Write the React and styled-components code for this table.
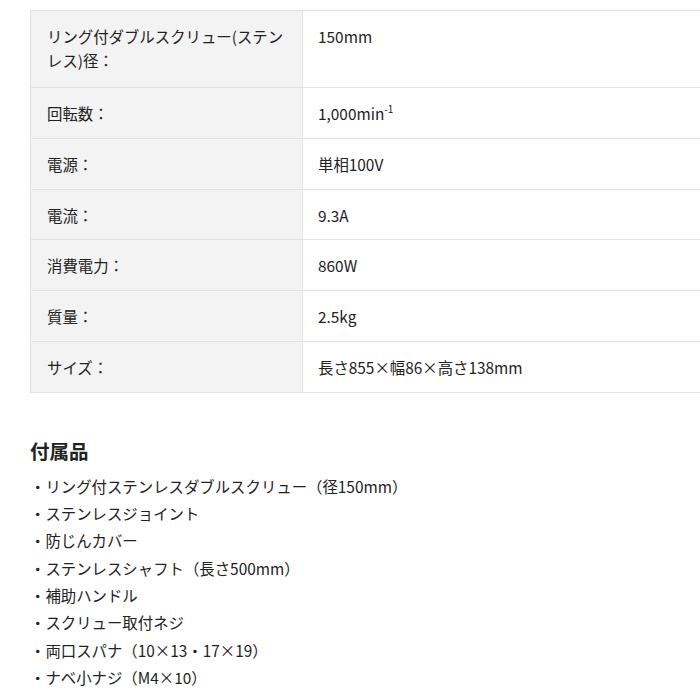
import React from 'react';
import styled, { createGlobalStyle } from 'styled-components';

const GlobalStyle = createGlobalStyle`
  html, body {
    margin: 0;
    padding: 0;
    background: #fff;
    overflow: hidden;
  }
  body {
    font-family: "Noto Sans CJK JP", "Noto Sans", sans-serif;
    color: #222;
  }
`

const Page = styled.div`
  width: 700px;
  height: 700px;
  padding: 10px 0 0 30px;
  box-sizing: border-box;
  overflow: hidden;
`

const SpecTable = styled.table`
  width: 700px;
  border-collapse: collapse;
  font-size: 15.4px;
  line-height: 24px;
`

const Label = styled.th`
  width: 272px;
  box-sizing: border-box;
  background: #f3f3f3;
  border: 1px solid #e2e2e2;
  padding: 13px 16px 12px 16px;
  text-align: left;
  vertical-align: top;
  font-weight: 400;
  height: ${props => props.tall ? '77px' : '50.8px'};
`

const Value = styled.td`
  border: 1px solid #e2e2e2;
  padding: 13px 15px 12px;
  vertical-align: top;
  background: #fff;
`

const Sup = styled.sup`
  font-size: 10px;
  line-height: 0;
  vertical-align: 7px;
`

const Heading = styled.h3`
  margin: 44px 0 8px;
  font-size: 19.5px;
  font-weight: 700;
  line-height: 28px;
`

const List = styled.ul`
  list-style: none;
  margin: 0;
  padding: 0;
  font-size: 15.4px;
  line-height: 27.3px;
`

const Item = styled.li`
  &::before {
    content: '・';
  }
`

const specs = [
  { label: 'リング付ダブルスクリュー(ステンレス)径：', value: '150mm', tall: true },
  { label: '回転数：', value: <>1,000min<Sup>-1</Sup></> },
  { label: '電源：', value: '単相100V' },
  { label: '電流：', value: '9.3A' },
  { label: '消費電力：', value: '860W' },
  { label: '質量：', value: '2.5kg' },
  { label: 'サイズ：', value: '長さ855×幅86×高さ138mm' },
]

const accessories = [
  'リング付ステンレスダブルスクリュー（径150mm）',
  'ステンレスジョイント',
  '防じんカバー',
  'ステンレスシャフト（長さ500mm）',
  '補助ハンドル',
  'スクリュー取付ネジ',
  '両口スパナ（10×13・17×19）',
  'ナベ小ナジ（M4×10）',
]

export default function App() {
  return (
    <Page>
      <GlobalStyle />
      <SpecTable>
        <tbody>
          {specs.map((s, i) => (
            <tr key={i}>
              <Label tall={s.tall}>{s.label}</Label>
              <Value>{s.value}</Value>
            </tr>
          ))}
        </tbody>
      </SpecTable>
      <Heading>付属品</Heading>
      <List>
        {accessories.map((a, i) => <Item key={i}>{a}</Item>)}
      </List>
    </Page>
  )
}
